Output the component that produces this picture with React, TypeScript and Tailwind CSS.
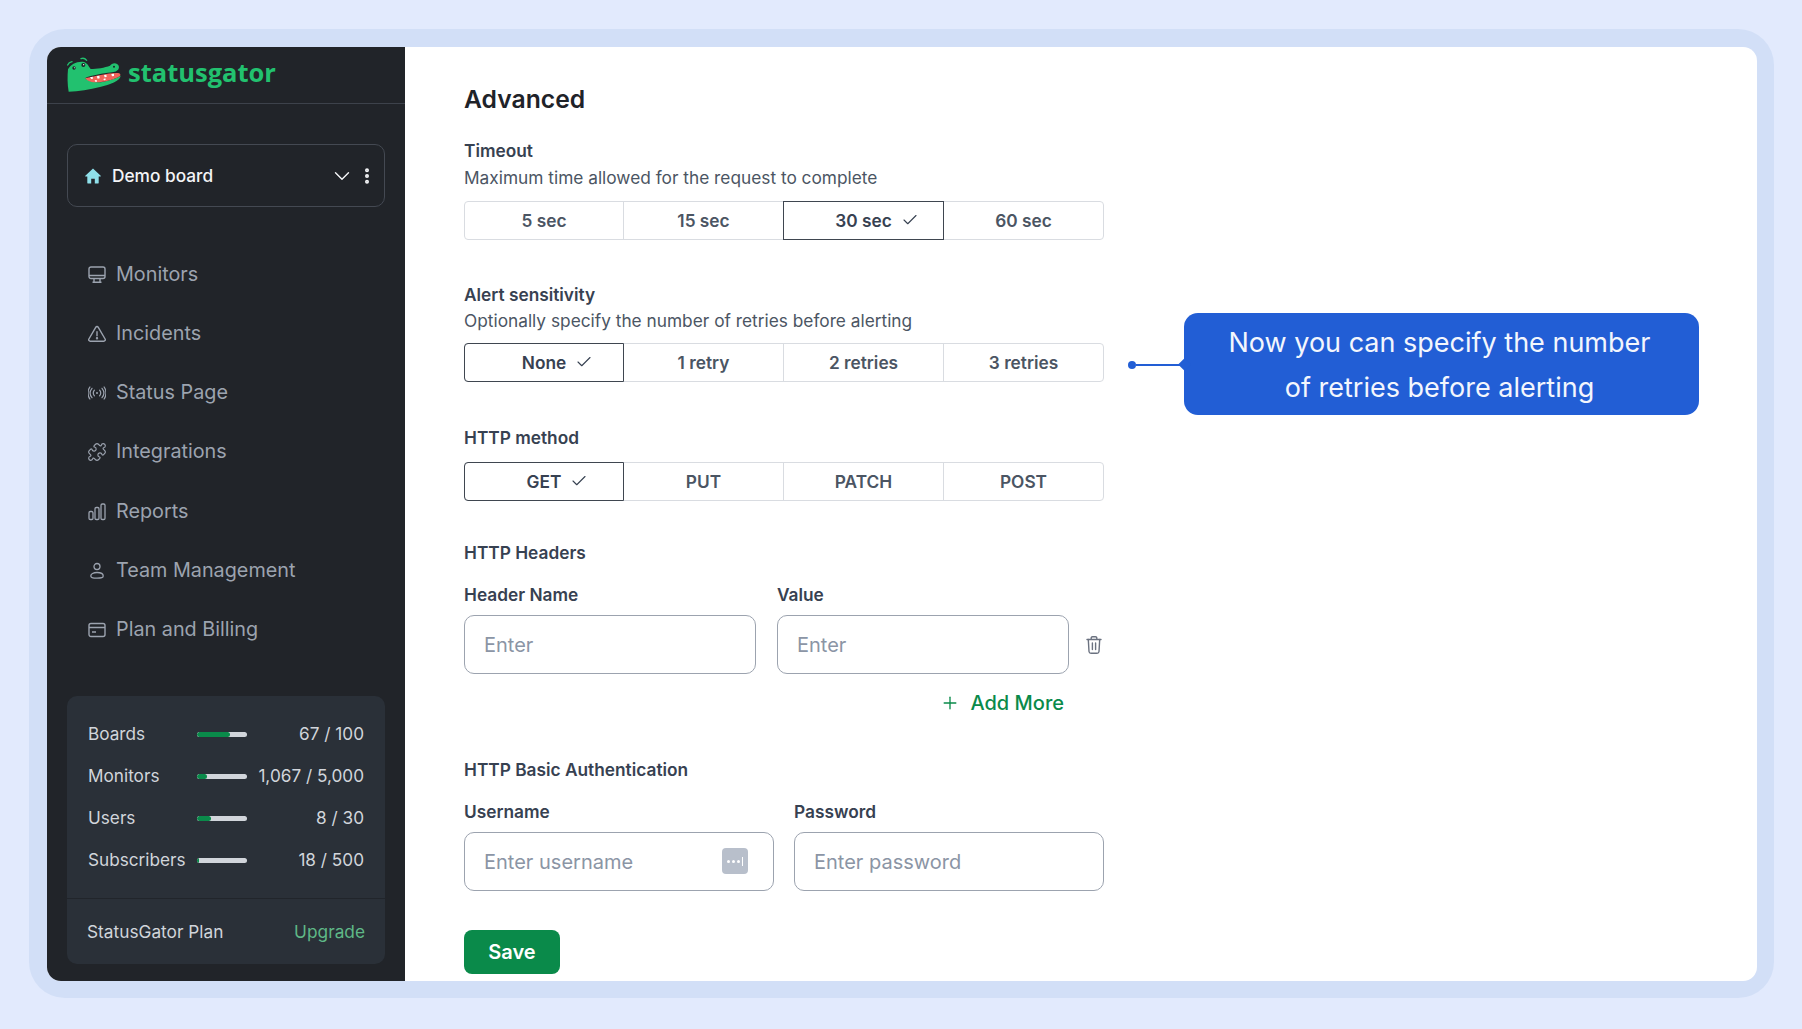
import React from 'react';
import { Check, ChevronDown, EllipsisVertical, Plus, Puzzle } from 'lucide-react';

function GatorLogo() {
  // drawn in 3x coordinates, cropped with the viewBox
  return (
    <svg width="55" height="36" viewBox="201 168 165 108" className="shrink-0">
      <path d="M204 205C212 190 232 180 252 183C262 186 266 196 272 204C290 204 315 200 330 194C336 184 352 184 356 194C360 204 350 212 340 213C320 216 290 220 262 228L255 232C270 245 300 247 320 240C340 234 352 230 362 224C360 240 330 250 300 258C270 266 235 272 206 272C202 250 202 225 204 205Z" fill="#22c16f" />
      <path d="M255 232C285 225 330 214 355 216C362 218 362 222 360 225C345 235 310 245 285 244C270 244 262 238 255 232Z" fill="#f2655b" />
      <path d="M270 229l8-2 1 6-5 1zM290 226l8-2 1 8-6 1zM312 222l7-1 1 7-6 1zM334 219l8-1 0 7-6 1zM284 238l6-1 1 5-5 0zM310 234l6-2 1 5-5 1z" fill="#fff" />
      <circle cx="250" cy="192" r="6" fill="#1d2127" />
      <circle cx="251" cy="191" r="2" fill="#fff" />
      <circle cx="222" cy="201" r="5" fill="#1d2127" />
      <circle cx="223" cy="200" r="1.6" fill="#fff" />
      <circle cx="342" cy="197" r="3" fill="#1d2127" />
      <path d="M203 192c2-5 7-9 13-10M243 173c5-2 13 0 17 5" fill="none" stroke="#22c16f" strokeWidth="4" strokeLinecap="round" />
    </svg>
  );
}

function HomeIcon() {
  return (
    <svg width="16" height="16" viewBox="0 0 16 16" fill="#8fe0ea" className="shrink-0">
      <path d="M8 .6.3 7.8c-.3.3-.1.7.3.7h1.700v6.400c0 .3.2.5.5.5h3.400v-4.600h3.600v4.600h3.400c.3 0 .5-.2.5-.5V8.500h1.700c.4 0 .6-.4.3-.7L8 .6Z" />
    </svg>
  );
}

type IconProps = { className?: string };

function MonitorIcon({ className }: IconProps) {
  return (
    <svg viewBox="0 0 18 18" fill="none" stroke="currentColor" strokeWidth="1.400" className={className}>
      <rect x="1" y="1" width="16" height="11.500" rx="2" />
      <path d="M1 9.500h16M6 12.500v3.500M12 12.500v3.500M4.500 16.300h9" />
    </svg>
  );
}

function AlertIcon({ className }: IconProps) {
  return (
    <svg viewBox="0 0 18 18" fill="none" stroke="currentColor" strokeWidth="1.400" strokeLinejoin="round" strokeLinecap="round" className={className}>
      <path d="M7.700 2.300.9 14c-.6 1 .1 2.200 1.300 2.200h13.600c1.200 0 1.900-1.200 1.300-2.200L10.300 2.300c-.6-1-2-1-2.600 0Z" />
      <path d="M9 6.800v4" />
      <circle cx="9" cy="13.300" r=".5" />
    </svg>
  );
}

function SignalIcon({ className }: IconProps) {
  return (
    <svg viewBox="0 0 18 18" fill="none" stroke="currentColor" strokeWidth="1.200" strokeLinecap="round" className={className}>
      <circle cx="9" cy="9" r="1" fill="currentColor" stroke="none" />
      <path d="M6.400 6.200c-1.300 1.600-1.300 4 0 5.600M11.600 6.200c1.300 1.600 1.300 4 0 5.600M4 4.300c-2.300 2.800-2.300 6.600 0 9.400M14 4.300c2.300 2.800 2.300 6.600 0 9.400M1.900 3C-.6 6.400-.6 11.600 1.900 15M16.100 3c2.500 3.400 2.500 8.600 0 12" />
    </svg>
  );
}

function BarsIcon({ className }: IconProps) {
  return (
    <svg viewBox="0 0 18 18" fill="none" stroke="currentColor" strokeWidth="1.300" className={className}>
      <rect x="1" y="8.500" width="4" height="8" rx="1.300" />
      <rect x="7" y="4.500" width="4" height="12" rx="1.300" />
      <rect x="13" y="1" width="4" height="15.500" rx="1.300" />
    </svg>
  );
}

function PersonIcon({ className }: IconProps) {
  return (
    <svg viewBox="0 0 18 18" fill="none" stroke="currentColor" strokeWidth="1.300" className={className}>
      <circle cx="9" cy="4.500" r="3" />
      <path d="M9 10.500c-3.600 0-6.200 1.500-6.200 3.400 0 1.700 1.600 2.300 6.200 2.300s6.200-.6 6.200-2.300c0-1.900-2.600-3.400-6.200-3.400Z" />
    </svg>
  );
}

function CardIcon({ className }: IconProps) {
  return (
    <svg viewBox="0 0 18 18" fill="none" stroke="currentColor" strokeWidth="1.400" className={className}>
      <rect x="1" y="2.500" width="16" height="13" rx="2" />
      <path d="M1 6.500h16M4 11h4" />
    </svg>
  );
}

function TrashIcon({ className }: IconProps) {
  return (
    <svg viewBox="0 0 18 20" fill="none" stroke="currentColor" strokeWidth="1.400" strokeLinecap="round" className={className}>
      <path d="M2 4.500h14M6.200 4.500V3a1.300 1.300 0 0 1 1.300-1.300h3A1.300 1.300 0 0 1 11.800 3v1.500" />
      <path d="M3.300 4.500l.7 12a2 2 0 0 0 2 1.800h6a2 2 0 0 0 2-1.800l.7-12M7.400 8v6.500M10.600 8v6.500" />
    </svg>
  );
}

const navItems = [
  { label: 'Monitors', icon: <MonitorIcon className="w-[18px] h-[18px]" /> },
  { label: 'Incidents', icon: <AlertIcon className="w-[18px] h-[18px]" /> },
  { label: 'Status Page', icon: <SignalIcon className="w-[18px] h-[18px]" /> },
  { label: 'Integrations', icon: <Puzzle size={20} strokeWidth={1.4} className="shrink-0" /> },
  { label: 'Reports', icon: <BarsIcon className="w-[18px] h-[18px]" /> },
  { label: 'Team Management', icon: <PersonIcon className="w-[18px] h-[18px]" /> },
  { label: 'Plan and Billing', icon: <CardIcon className="w-[18px] h-[18px]" /> },
];

const usage = [
  { label: 'Boards', fill: 33, value: '67 / 100' },
  { label: 'Monitors', fill: 10, value: '1,067 / 5,000' },
  { label: 'Users', fill: 14, value: '8 / 30' },
  { label: 'Subscribers', fill: 2, value: '18 / 500' },
];

function Sidebar() {
  return (
    <aside className="w-[358px] shrink-0 bg-[#212429] flex flex-col">
      <div className="h-[57px] shrink-0 border-b border-[#3d424b] flex items-center pl-[20px] gap-[6px]">
        <GatorLogo />
        <span className="[font-family:'Open_Sans',sans-serif] font-bold text-[25.5px] leading-none text-[#22c16f] -mt-[5px]">statusgator</span>
      </div>

      <div className="mx-[20px] mt-[40px] h-[63px] shrink-0 rounded-[10px] border border-[#444952] flex items-center pl-[17px] pr-[7px]">
        <HomeIcon />
        <span className="ml-[11px] text-[17.3px] font-medium text-[#f3f4f6]">Demo board</span>
        <ChevronDown size={26} strokeWidth={1.3} className="ml-auto text-[#f3f4f6]" />
        <EllipsisVertical size={20} strokeWidth={2.8} className="ml-[2px] text-[#f3f4f6]" />
      </div>

      <nav className="mt-[38px] flex flex-col">
        {navItems.map((item) => (
          <div key={item.label} className="h-[59.25px] flex items-center pl-[41px] gap-[10px] text-[#9ca3af]">
            <span className="w-[18px] h-[18px] shrink-0 flex items-center justify-center">{item.icon}</span>
            <span className="text-[19.8px] leading-none">{item.label}</span>
          </div>
        ))}
      </nav>

      <div className="mx-[20px] mt-auto mb-[17px] rounded-[10px] bg-[#2a3038]">
        <div className="pt-[17px] pb-[17px] px-[21px] border-b border-[#21252b]">
          {usage.map((row) => (
            <div key={row.label} className="h-[42px] flex items-center text-[17.2px] text-[#d1d5db]">
              <span className="w-[109px] shrink-0">{row.label}</span>
              <div className="relative w-[50px] h-[5px] shrink-0 rounded-full bg-[#d1d5db] overflow-hidden">
                <div className="absolute inset-y-0 left-0 bg-[#0a8a4a] rounded-full" style={{ width: row.fill }} />
              </div>
              <span className="ml-auto whitespace-nowrap">{row.value}</span>
            </div>
          ))}
        </div>
        <div className="h-[65px] flex items-center justify-between pl-[20px] pr-[20px] text-[17.3px]">
          <span className="text-[#d1d5db]">StatusGator Plan</span>
          <span className="text-[#5fb887]">Upgrade</span>
        </div>
      </div>
    </aside>
  );
}

function Segments({ options, selected }: { options: string[]; selected: number }) {
  return (
    <div className="grid grid-cols-[158px_160px_160px_1fr] w-[640px] h-[39px] rounded-[4px] border border-[#d9dce1]">
      {options.map((opt, i) => {
        const active = i === selected;
        return (
          <div
            key={opt}
            className={
              active
                ? 'relative z-10 -my-px -mr-px first:-ml-px first:rounded-l-[4px] flex items-center justify-center border-[1.5px] border-[#3f4650] text-[17.3px] font-semibold text-[#374151]'
                : 'flex items-center justify-center border-l border-[#d9dce1] first:border-l-0 text-[17.3px] font-semibold text-[#4b5563]'
            }
          >
            <span className="relative">
              {opt}
              {active && <Check size={18} strokeWidth={1.5} className="absolute top-[3px] -right-[27px] text-[#374151]" />}
            </span>
          </div>
        );
      })}
    </div>
  );
}

function Label({ children, className }: { children: React.ReactNode; className?: string }) {
  return <div className={`text-[17.3px] leading-[24px] font-semibold text-[#374151] ${className ?? ''}`}>{children}</div>;
}

function Field({ label, placeholder, width, children }: { label: string; placeholder: string; width: string; children?: React.ReactNode }) {
  return (
    <div className={width}>
      <Label>{label}</Label>
      <div className="relative mt-[8px]">
        <input
          placeholder={placeholder}
          className="w-full h-[59px] rounded-[10px] border border-[#9ca3af] pl-[19px] pr-[19px] text-[20px] outline-none placeholder:text-[#8b95a5]"
        />
        {children}
      </div>
    </div>
  );
}

export default function App() {
  return (
    <div className="h-screen w-full overflow-hidden bg-[#e2eafd] pt-[29px] pl-[29px] pr-[28px] pb-[31px] [font-family:Inter,sans-serif]">
      <div className="h-full rounded-[36px] bg-[#d2dff7] pt-[18px] pl-[18px] pr-[17px] pb-[17px]">
        <div className="relative h-full flex rounded-[14px] overflow-hidden bg-white">
          <Sidebar />
          <main className="flex-1 pl-[59px] pt-[36px]">
            <h1 className="text-[24.700px] leading-[32px] font-semibold text-[#1f2329]">Advanced</h1>

            <Label className="mt-[24px]">Timeout</Label>
            <div className="mt-[3px] text-[17.300px] leading-[24px] text-[#4b5563]">Maximum time allowed for the request to complete</div>
            <div className="mt-[11px]">
              <Segments options={['5 sec', '15 sec', '30 sec', '60 sec']} selected={2} />
            </div>

            <Label className="mt-[43px]">Alert sensitivity</Label>
            <div className="mt-[2px] text-[17.300px] leading-[24px] text-[#4b5563]">Optionally specify the number of retries before alerting</div>
            <div className="mt-[10px]">
              <Segments options={['None', '1 retry', '2 retries', '3 retries']} selected={0} />
            </div>

            <Label className="mt-[44px]">HTTP method</Label>
            <div className="mt-[12px]">
              <Segments options={['GET', 'PUT', 'PATCH', 'POST']} selected={0} />
            </div>

            <Label className="mt-[40px]">HTTP Headers</Label>
            <div className="mt-[18px] flex w-[640px] items-end">
              <Field label="Header Name" placeholder="Enter" width="w-[292px]" />
              <div className="w-[21px] shrink-0" />
              <Field label="Value" placeholder="Enter" width="w-[292px]" />
              <div className="flex-1 h-[59px] flex items-center justify-end pr-px">
                <TrashIcon className="w-[18px] h-[20px] text-[#6b7280]" />
              </div>
            </div>
            <div className="mt-[17px] w-[600px] h-[24px] flex items-center justify-end gap-[10px] text-[#0a8a4a]">
              <Plus size={20} strokeWidth={1.6} />
              <span className="text-[20px] font-medium leading-[24px]">Add More</span>
            </div>

            <Label className="mt-[43px]">HTTP Basic Authentication</Label>
            <div className="mt-[18px] flex w-[640px] gap-[20px]">
              <Field label="Username" placeholder="Enter username" width="w-[310px]">
                <span className="absolute right-[26px] top-[16px] w-[26px] h-[26px] rounded-[4px] bg-[#b8bfcb] flex items-center justify-center gap-[2px]">
                  <span className="w-[3px] h-[3px] rounded-full bg-white" />
                  <span className="w-[3px] h-[3px] rounded-full bg-white" />
                  <span className="w-[3px] h-[3px] rounded-full bg-white" />
                  <span className="w-px h-[9px] bg-white" />
                </span>
              </Field>
              <Field label="Password" placeholder="Enter password" width="w-[310px]" />
            </div>

            <button className="mt-[39px] w-[96px] h-[44px] rounded-[8px] bg-[#0a8a4a] text-white text-[20px] font-semibold">Save</button>
          </main>

          {/* callout pointing at the retries row */}
          <div className="absolute left-[1081px] top-[314px] flex items-center">
            <span className="w-[8px] h-[8px] rounded-full bg-[#225ed5]" />
            <span className="w-[48px] h-[2px] bg-[#225ed5]" />
          </div>
          <div className="absolute left-[1137px] top-[266px] w-[515px] h-[102px] rounded-[14px] bg-[#225ed5] flex items-center justify-center pt-[2px] pr-[4px] text-center text-[27px] leading-[45px] text-[#f3f6fd]">
            <span className="absolute -left-[4px] top-[47px] w-[9px] h-[9px] rotate-45 bg-[#225ed5]" />
            <span>Now you can specify the number<br />of retries before alerting</span>
          </div>
        </div>
      </div>
    </div>
  );
}
